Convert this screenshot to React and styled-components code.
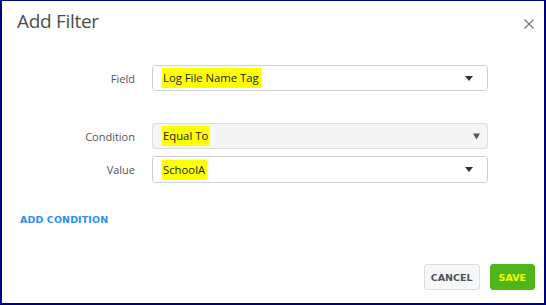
import React from "react";
import styled, { createGlobalStyle } from "styled-components";

const Global = createGlobalStyle`
  html, body { margin: 0; padding: 0; background: #fff; }
  * { box-sizing: border-box; }
`;

const Dialog = styled.div`
  width: 546px;
  height: 305px;
  border-style: solid;
  border-color: #00007f;
  border-width: 1px 2px 2px 2px;
  background: #fff;
  display: flex;
  flex-direction: column;
  font-family: "Open Sans", "Liberation Sans", sans-serif;
`;

const Header = styled.div`
  display: flex;
  align-items: center;
  justify-content: space-between;
  height: 40px;
  padding: 0 10px 0 15px;
`;

const Title = styled.h1`
  margin: 0;
  font-size: 19px;
  font-weight: 400;
  color: #4d4d4d;
  letter-spacing: -0.3px;
`;

const Close = styled.svg`
  width: 10px;
  height: 10px;
  display: block;
  margin-top: 5px;
`;

const Form = styled.div`
  display: flex;
  flex-direction: column;
  padding: 24px 0 0 0;
`;

const Row = styled.div`
  display: grid;
  grid-template-columns: 133px 336px;
  column-gap: 17px;
  align-items: center;
  margin-top: ${(p) => p.$mt || 0}px;
`;

const Label = styled.div`
  text-align: right;
  font-size: 11px;
  color: #555;
`;

const Select = styled.div`
  height: ${(p) => p.$h || 26}px;
  border: 1px solid ${(p) => (p.$disabled ? "#dcdcdc" : "#cfcfcf")};
  border-radius: 3px;
  background: ${(p) => (p.$disabled ? "#f5f5f5" : "#fff")};
  display: flex;
  align-items: center;
  justify-content: space-between;
  padding: 0 ${(p) => (p.$disabled ? 7 : 14)}px 0 9px;
`;

const Value = styled.span`
  background: #ffff00;
  font-size: 11.3px;
  color: #222;
  padding: 2px 2px 3px 1px;
  line-height: 15px;
`;

const Caret = styled.svg`
  display: block;
  width: ${(p) => p.$w}px;
  height: ${(p) => p.$hh}px;
`;

const LinkRow = styled.div`
  padding: 23px 0 0 18px;
`;

const Link = styled.a`
  font-family: "DejaVu Sans", "Liberation Sans", sans-serif;
  font-size: 9.5px;
  font-weight: 700;
  color: #2e8ff0;
  letter-spacing: 0.1px;
  text-decoration: none;
`;

const Footer = styled.div`
  margin-top: auto;
  display: flex;
  justify-content: flex-end;
  gap: 10px;
  padding: 0 9px 13px 0;
`;

const Button = styled.button`
  height: 26px;
  padding: 0 ${(p) => (p.$primary ? 8 : 6)}px;
  border-radius: 3px;
  border: 1px solid ${(p) => (p.$primary ? "#4fb51c" : "#dedede")};
  background: ${(p) => (p.$primary ? "#4fb51c" : "#f8f8f8")};
  color: ${(p) => (p.$primary ? "#f7f700" : "#4d5360")};
  font-family: "DejaVu Sans", "Liberation Sans", sans-serif;
  font-size: 9.5px;
  font-weight: 700;
  cursor: pointer;
`;

const CaretIcon = ({ disabled }) =>
  disabled ? (
    <Caret $w={7} $hh={7} viewBox="0 0 7 7">
      <path d="M0 0.5 H7 L3.5 6.5 Z" fill="#555" />
    </Caret>
  ) : (
    <Caret $w={8} $hh={5} viewBox="0 0 8 5">
      <path d="M0 0 H8 L4 5 Z" fill="#333" />
    </Caret>
  );

export default function App() {
  return (
    <>
      <Global />
      <Dialog>
        <Header>
          <Title>Add Filter</Title>
          <Close viewBox="0 0 10 10">
            <path d="M0.5 0.5 L9.5 9.5 M9.5 0.5 L0.5 9.5" stroke="#6b7c8f" strokeWidth="1.3" />
          </Close>
        </Header>
        <Form>
          <Row>
            <Label>Field</Label>
            <Select>
              <Value>Log File Name Tag</Value>
              <CaretIcon />
            </Select>
          </Row>
          <Row $mt={32}>
            <Label>Condition</Label>
            <Select $disabled>
              <Value>Equal To</Value>
              <CaretIcon disabled />
            </Select>
          </Row>
          <Row $mt={7}>
            <Label>Value</Label>
            <Select $h={27}>
              <Value>SchoolA</Value>
              <CaretIcon />
            </Select>
          </Row>
        </Form>
        <LinkRow>
          <Link>ADD CONDITION</Link>
        </LinkRow>
        <Footer>
          <Button>CANCEL</Button>
          <Button $primary>SAVE</Button>
        </Footer>
      </Dialog>
    </>
  );
}
